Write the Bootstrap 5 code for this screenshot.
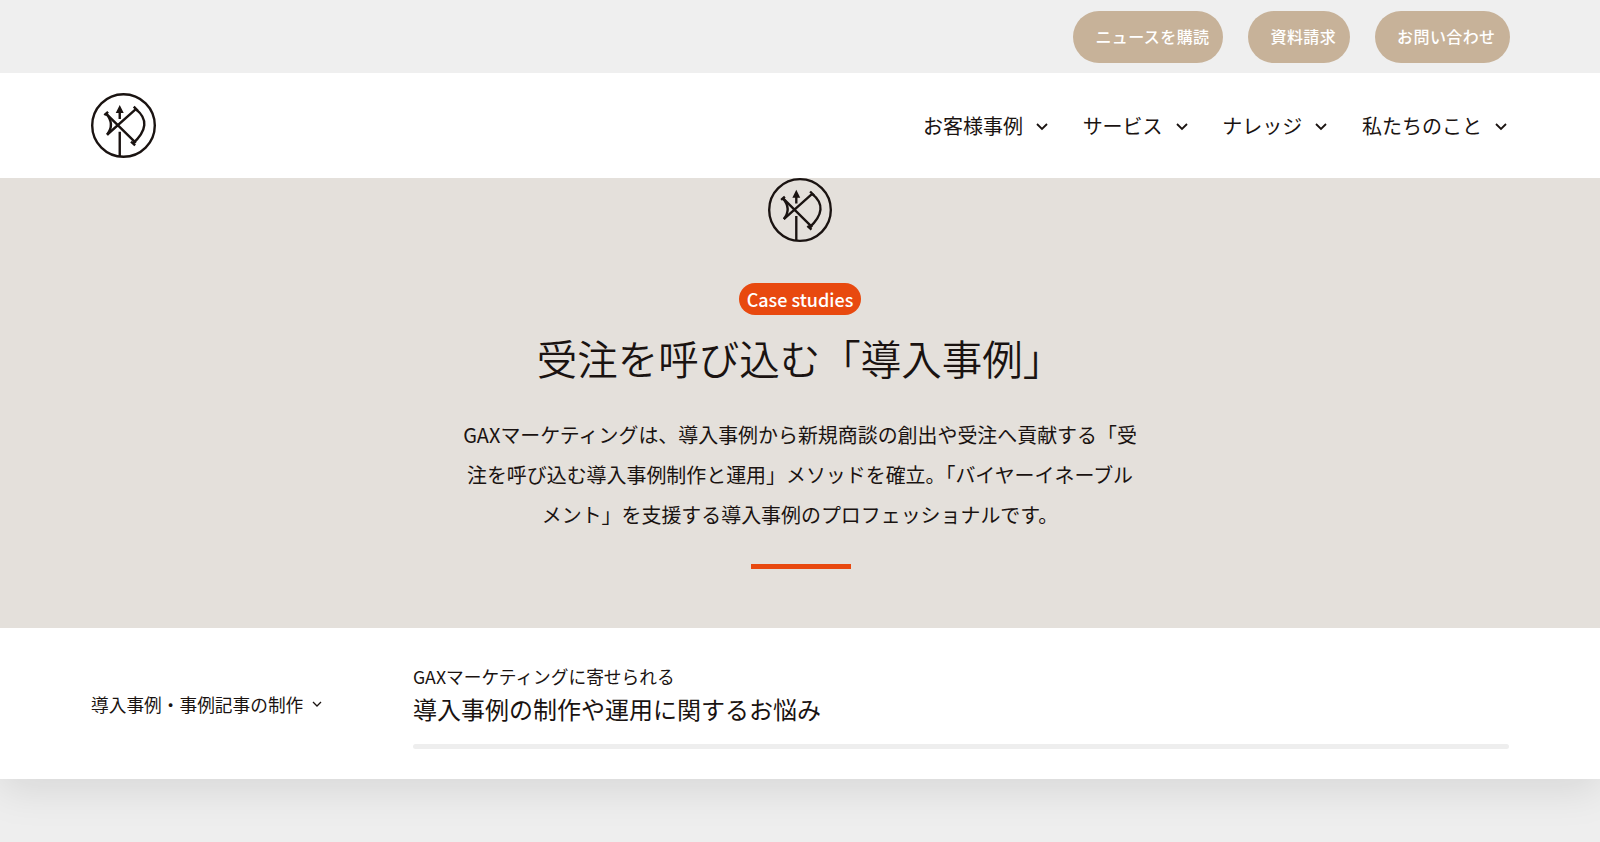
<!DOCTYPE html>
<html lang="ja">
<head>
    <meta charset="UTF-8">
    <meta name="viewport" content="width=device-width, initial-scale=1.0">
    <title>導入事例</title>
    <link href="https://cdn.jsdelivr.net/npm/bootstrap@5.3.2/dist/css/bootstrap.min.css" rel="stylesheet">
    <style>
        body { background: #eee; color: #1a1311; font-family: "Noto Sans CJK JP", "Noto Sans", sans-serif; height: 842px; overflow: hidden; }
        .page-wrap { padding-left: 91px; padding-right: 91px; }
        .top-strip { height: 73px; background: #efefef; gap: 25px; padding-right: 90.500px; }
        .pill-btn { height: 52px; line-height: 50px; padding: 0 14px 0 22px; border-radius: 26px; background: #c7b299; color: #fff; font-size: 16px; font-weight: 500; letter-spacing: .4px; text-decoration: none; }
        .main-head { height: 105px; background: #fff; }
        .head-logo { width: 65px; height: 65px; }
        .menu-row { gap: 34.7px; padding-right: 2px; padding-top: 1px; }
        .menu-item { font-size: 20px; color: #1a1311; text-decoration: none; gap: 13px; }
        .menu-item svg { margin-top: 2px; }
        .hero-logo { width: 64px; height: 64px; display: block; margin: 0 auto; }
        .hero-band { height: 450px; background: #e4e0db; position: relative; z-index: 1; }
        .case-tag { display: inline-block; margin-top: 41px; height: 32px; line-height: 32px; padding: 0 8px; border-radius: 16px; background: #e8490f; color: #fff; font-size: 18px; font-weight: 500; }
        .hero-title { font-size: 40.5px; font-weight: 350; line-height: 60px; margin: 13px 0 0; }
        .hero-text { width: 680px; margin: 27px auto 0; font-size: 19.950px; line-height: 40px; }
        .hero-rule { width: 100px; height: 5px; margin: 29px 749px 0 751px; background: #e8490f; }
        .topic-band { height: 151px; background: #fff; box-shadow: 0 10px 40px rgba(0, 0, 0, .1); position: relative; }
        .topic-left { width: 322px; font-size: 17.700px; gap: 9px; padding-top: 2px; }
        .topic-right { padding-top: 4px; }
        .topic-sub { font-size: 17.700px; line-height: 26px; }
        .topic-title { font-size: 24px; font-weight: 400; line-height: 36px; margin: 2px 0 0; }
        .topic-track { height: 5px; margin-top: 17px; border-radius: 3px; background: #eee; }
    </style>
</head>
<body>
    <div class="top-strip page-wrap d-flex justify-content-end align-items-center">
        <a href="#" class="pill-btn">ニュースを購読</a>
        <a href="#" class="pill-btn">資料請求</a>
        <a href="#" class="pill-btn">お問い合わせ</a>
    </div>

    <header class="main-head page-wrap d-flex justify-content-between align-items-center">
        <svg class="head-logo" viewBox="65 40 190 190" fill="none" stroke="#1a1311" stroke-width="7">
            <circle cx="160" cy="135" r="91.500"/>
            <path d="M149 227V153M149 116V92"/>
            <path d="M143 95L149 83L155 95Z" fill="#1a1311"/>
            <path d="M109 100L196 186M112 162L196 87"/>
            <path d="M109 100Q136 131 112 162M196 87Q250 130 187 188"/>
            <path d="M104 105L115 95M190 80L202 92M182 182L194 193"/>
        </svg>
        <nav class="menu-row d-flex align-items-center">
            <a href="#" class="menu-item d-flex align-items-center">お客様事例
                <svg width="12" height="8" viewBox="0 0 12 8" fill="none" stroke="#1a1311" stroke-width="1.800"><path d="M1 1l5 5 5-5"/></svg></a>
            <a href="#" class="menu-item d-flex align-items-center">サービス
                <svg width="12" height="8" viewBox="0 0 12 8" fill="none" stroke="#1a1311" stroke-width="1.800"><path d="M1 1l5 5 5-5"/></svg></a>
            <a href="#" class="menu-item d-flex align-items-center">ナレッジ
                <svg width="12" height="8" viewBox="0 0 12 8" fill="none" stroke="#1a1311" stroke-width="1.800"><path d="M1 1l5 5 5-5"/></svg></a>
            <a href="#" class="menu-item d-flex align-items-center">私たちのこと
                <svg width="12" height="8" viewBox="0 0 12 8" fill="none" stroke="#1a1311" stroke-width="1.800"><path d="M1 1l5 5 5-5"/></svg></a>
        </nav>
    </header>

    <section class="hero-band text-center">
        <svg class="hero-logo" viewBox="65 40 190 190" fill="none" stroke="#1a1311" stroke-width="7">
            <circle cx="160" cy="135" r="91.500"/>
            <path d="M149 227V153M149 116V92"/>
            <path d="M143 95L149 83L155 95Z" fill="#1a1311"/>
            <path d="M109 100L196 186M112 162L196 87"/>
            <path d="M109 100Q136 131 112 162M196 87Q250 130 187 188"/>
            <path d="M104 105L115 95M190 80L202 92M182 182L194 193"/>
        </svg>
        <span class="case-tag">Case studies</span>
        <h1 class="hero-title">受注を呼び込む「導入事例」</h1>
        <p class="hero-text">GAXマーケティングは、導入事例から新規商談の創出や受注へ貢献する「受注を呼び込む導入事例制作と運用」メソッドを確立。「バイヤーイネーブルメント」を支援する導入事例のプロフェッショナルです。</p>
        <div class="hero-rule"></div>
    </section>

    <section class="topic-band page-wrap d-flex align-items-center">
        <div class="topic-left d-flex align-items-center flex-shrink-0">導入事例・事例記事の制作
            <svg width="10" height="6" viewBox="0 0 10 6" fill="none" stroke="#1a1311" stroke-width="1.300"><path d="M1 1l4 4 4-4"/></svg>
        </div>
        <div class="topic-right flex-grow-1">
            <div class="topic-sub">GAXマーケティングに寄せられる</div>
            <h2 class="topic-title">導入事例の制作や運用に関するお悩み</h2>
            <div class="topic-track"></div>
        </div>
    </section>
    <script src="https://cdn.jsdelivr.net/npm/bootstrap@5.3.2/dist/js/bootstrap.bundle.min.js"></script>
</body>
</html>
